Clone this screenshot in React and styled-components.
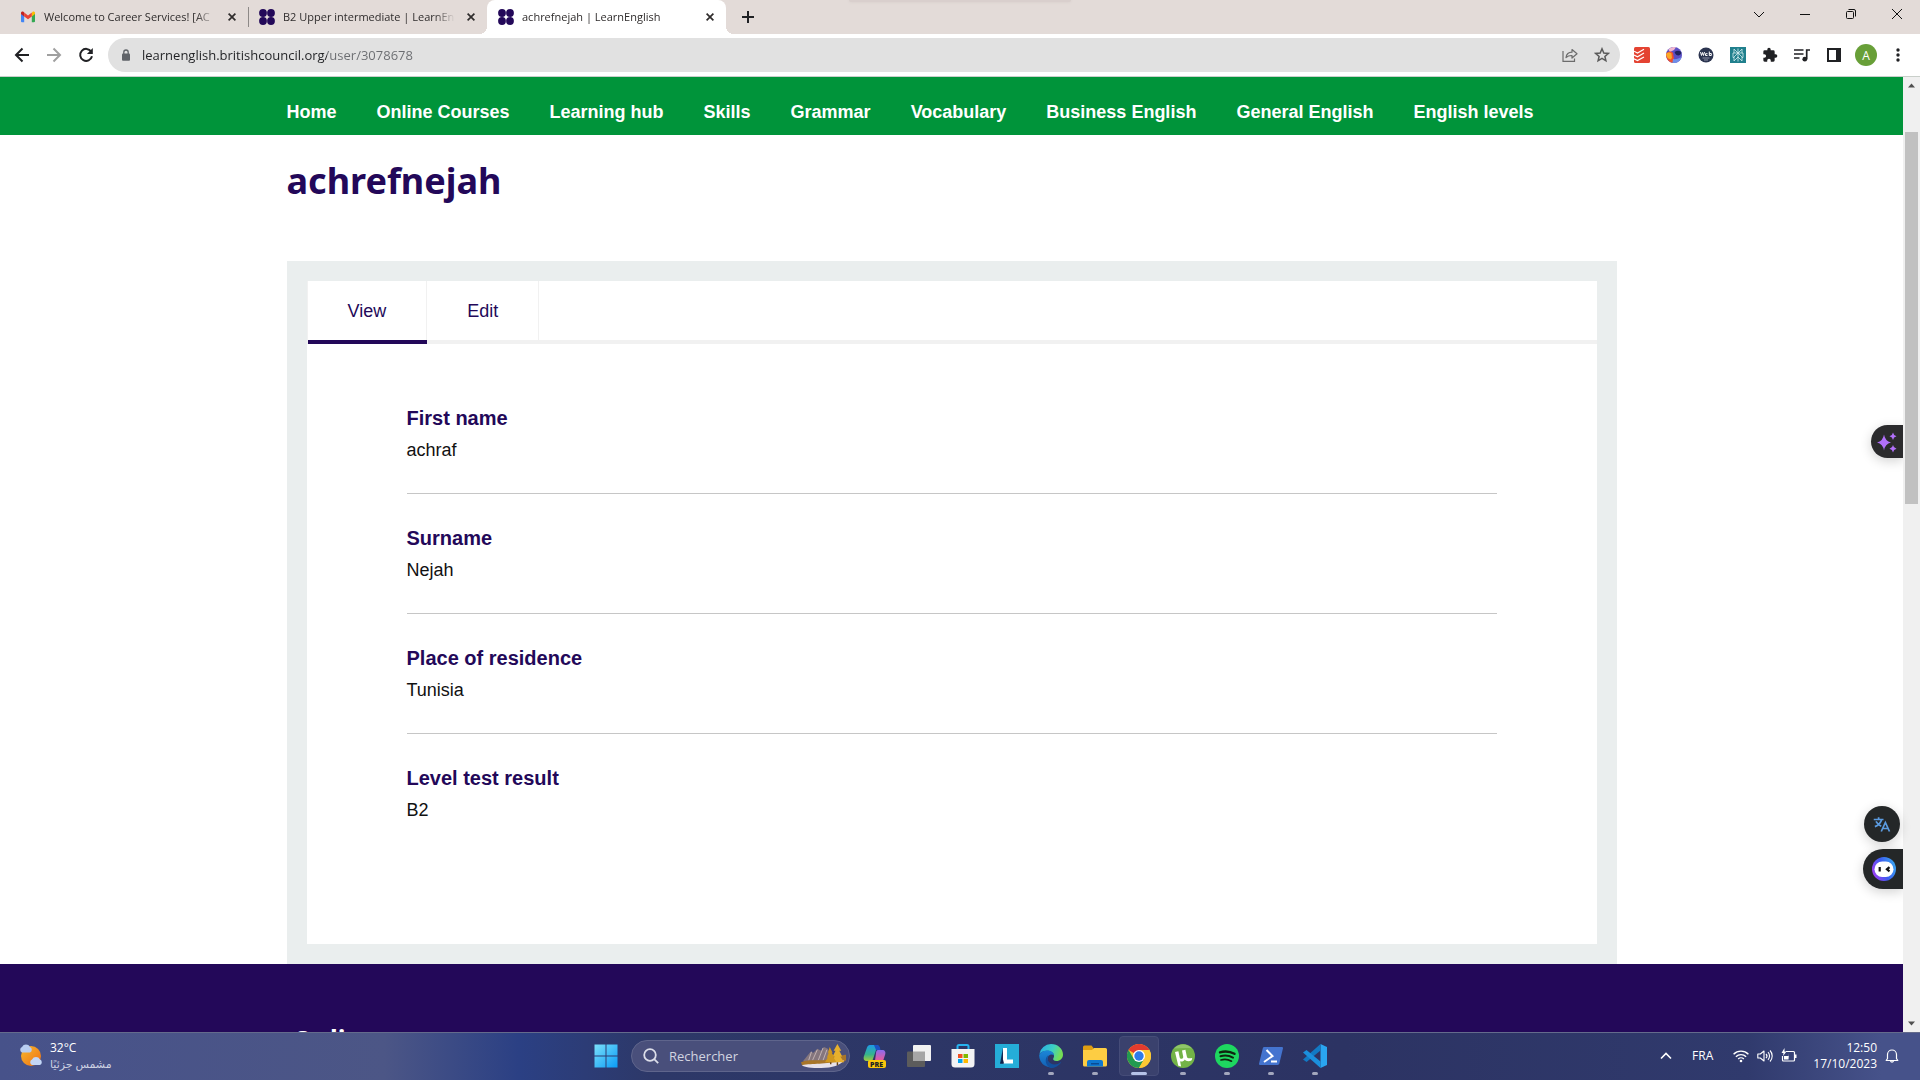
import React from "react";
import styled, { createGlobalStyle } from "styled-components";

const UI = '"Open Sans", "Noto Sans", "DejaVu Sans", sans-serif';
const BODY = '"Liberation Sans", Arial, sans-serif';
const BRAND = '"Noto Sans", "Open Sans", sans-serif';
const INDIGO = "#230859";

const GlobalStyle = createGlobalStyle`
  *, *::before, *::after { box-sizing: border-box; }
  html, body { margin: 0; height: 100%; overflow: hidden; }
  button { margin: 0; padding: 0; border: 0; background: none; color: inherit; font: inherit; cursor: pointer; }
  a { color: inherit; text-decoration: none; }
  svg { display: block; flex: none; }
`;

const Screen = styled.div`
  display: flex;
  flex-direction: column;
  height: 100vh;
  background: #fff;
  font-family: ${UI};
`;

/* Browser window */

const TabStrip = styled.div`
  position: relative;
  display: flex;
  height: 34px;
  padding-left: 9px;
  background: #e3dbd8;
  color: #2f2c2c;
`;

const HiddenToast = styled.div`
  position: absolute;
  top: 0;
  left: 50%;
  width: 222px;
  height: 2px;
  margin-left: -111px;
  border-radius: 0 0 4px 4px;
  background: #d9cfcd;
  box-shadow: 0 0 3px #d3c9c7;
`;

const TabBox = styled.div`
  position: relative;
  display: flex;
  align-items: center;
  width: 239px;
  height: 34px;
  padding: 0 8px 0 11px;
  border-radius: 8px 8px 0 0;
  background: ${(p) => (p.$active ? "#fff" : "transparent")};

  &::before, &::after {
    content: "";
    display: ${(p) => (p.$active ? "block" : "none")};
    position: absolute;
    bottom: 0;
    width: 8px;
    height: 8px;
  }
  &::before { right: 100%; background: radial-gradient(circle at 0 0, transparent 8px, #fff 8px); }
  &::after { left: 100%; background: radial-gradient(circle at 100% 0, transparent 8px, #fff 8px); }
`;

const TabDivider = styled.span`
  align-self: flex-start;
  width: 1px;
  height: 20px;
  margin: 7px -1px 0 0;
  background: #8d8987;
`;

const TabTitle = styled.button`
  flex: 1;
  min-width: 0;
  height: 28px;
  margin-left: 8px;
  overflow: hidden;
  font-size: 11px;
  line-height: 28px;
  text-align: left;
  white-space: nowrap;
  mask-image: linear-gradient(to right, #000 88%, transparent);
`;

const TabButton = styled.button`
  display: grid;
  place-items: center;
  width: 16px;
  height: 34px;
  margin-left: ${(p) => p.$gap || 8}px;
`;

const WindowControls = styled.div`
  display: flex;
  margin-left: auto;
  color: #111;
`;

const WindowButton = styled.button`
  display: grid;
  place-items: center;
  width: 46px;
  height: 28px;
`;

const Toolbar = styled.div`
  display: flex;
  align-items: center;
  height: 43px;
  padding: 0 6px;
  border-bottom: 1px solid #c9cfca;
  background: #fff;
  color: #202124;
`;

const ToolButton = styled.button`
  display: grid;
  place-items: center;
  width: 32px;
  height: 34px;
  color: ${(p) => p.$color || "#202124"};
`;

const Omnibox = styled.form`
  display: flex;
  flex: 1;
  align-items: center;
  height: 34px;
  margin: 0 6px;
  padding: 0 2px 0 12px;
  border-radius: 17px;
  background: #e1e1e1;
`;

const Address = styled.input`
  flex: 1;
  min-width: 0;
  height: 34px;
  margin-left: 10px;
  padding: 0;
  border: 0;
  outline: 0;
  background: linear-gradient(to right, #202124 185px, #6a6c70 185px);
  background-clip: text;
  color: #202124;
  -webkit-text-fill-color: transparent;
  font-family: ${UI};
  font-size: 13px;
`;

const Avatar = styled.span`
  display: grid;
  place-items: center;
  width: 22px;
  height: 22px;
  border-radius: 50%;
  background: #689f38;
  color: #fff;
  font-size: 12px;
`;

/* Page viewport */

const Viewport = styled.div`
  position: relative;
  display: flex;
  flex: 1;
  min-height: 0;
`;

const Page = styled.div`
  flex: 1;
  min-width: 0;
  overflow: hidden;
  font-family: ${BODY};
  font-size: 18px;
`;

const Container = styled.div`
  max-width: 1330px;
  margin: 0 auto;
`;

const NavBar = styled.nav`
  background: #00943a;
`;

const NavList = styled(Container).attrs({ as: "ul" })`
  display: flex;
  gap: 40px;
  padding: 25px 0 13px;
  color: #fff;
  font-weight: bold;
  line-height: 20px;
  list-style: none;
  white-space: nowrap;
`;

const PageTitle = styled.h1`
  margin: 0;
  padding: 20px 0 54px;
  color: ${INDIGO};
  font-family: ${BRAND};
  font-size: 36px;
  line-height: 52px;
`;

const Frame = styled.main`
  padding: 20px;
  background: #eaeeee;
`;

const Card = styled.section`
  background: #fff;
`;

const CardTabs = styled.div`
  display: flex;
  border-bottom: 4px solid #f1f1f1;
  border-left: 1px solid #f1f1f1;
`;

const CardTab = styled.a`
  padding: 2px 40px 0;
  border-right: 1px solid #f1f1f1;
  box-shadow: ${(p) => (p.$current ? `0 4px 0 ${INDIGO}` : "none")};
  color: ${INDIGO};
  line-height: 57px;
`;

const Fields = styled.dl`
  margin: 0;
  padding: 30px 100px 90px;
`;

const Field = styled.div`
  padding: 30px 0 25px;
  border-bottom: 1px solid #c6c6c6;

  &:last-child { border-color: transparent; }
`;

const FieldName = styled.dt`
  color: ${INDIGO};
  font-size: 20px;
  font-weight: bold;
  line-height: 28px;
`;

const FieldValue = styled.dd`
  margin: 0;
  color: #111;
  line-height: 36px;
`;

const Footer = styled.footer`
  padding: 56px 0;
  background: ${INDIGO};
  color: #fff;
`;

const FooterTitle = styled.h2`
  margin: 0;
  padding-left: 6px;
  font-family: ${BRAND};
  font-size: 26px;
  line-height: 40px;
`;

const ScrollBar = styled.div`
  display: grid;
  grid-template-rows: 17px 38fr 372fr 511fr 17px;
  justify-items: center;
  align-items: center;
  width: 17px;
  background: #f0f0f0;
`;

const ScrollThumb = styled.div`
  grid-row: 3;
  align-self: stretch;
  width: 13px;
  background: #c1c1c1;
`;

const ScrollArrow = styled.button`
  display: grid;
  place-items: center;
  grid-row: ${(p) => p.$row};
  width: 17px;
  height: 17px;
`;

const FloatButton = styled.button`
  position: absolute;
  top: ${(p) => p.$top}px;
  right: ${(p) => (p.$round ? 20 : 17)}px;
  display: flex;
  align-items: center;
  justify-content: ${(p) => (p.$round ? "center" : "flex-start")};
  width: ${(p) => p.$w}px;
  height: ${(p) => p.$h}px;
  padding-left: ${(p) => p.$pad || 0}px;
  border-radius: ${(p) => (p.$round ? "50%" : "20px 0 0 20px")};
  background: ${(p) => p.$bg || "#242728"};
  box-shadow: 0 3px 12px rgba(0, 0, 0, 0.18);
  clip-path: ${(p) => (p.$round ? "none" : "inset(-20px 0 -20px -20px)")};
`;

/* Taskbar */

const TaskBar = styled.footer`
  display: grid;
  grid-template-columns: 1fr auto 1fr;
  height: 48px;
  padding-bottom: 1px;
  border-top: 1px solid #646b8c;
  background: linear-gradient(to right, #47528a 0, #4c5686 20%, #2b4084 27%, #2d3868 34%, #2c3363 70%, #303a6d 91%, #46528a 98%);
  color: #fff;
  font-size: 12px;
`;

const Weather = styled.button`
  display: flex;
  align-items: center;
  justify-self: start;
  gap: 7px;
  padding-left: 17px;
  line-height: 16px;
  text-align: left;
`;

const WeatherText = styled.span`
  display: block;
  color: ${(p) => (p.$soft ? "#cdd1e2" : "#fff")};
  font-size: ${(p) => (p.$soft ? 11 : 12)}px;
`;

const Apps = styled.div`
  display: flex;
  padding-left: 1px;
`;

const AppButton = styled.button`
  position: relative;
  display: grid;
  place-items: center;
  width: 44px;
  height: 46px;

  &::after {
    content: "";
    display: ${(p) => (p.$state ? "block" : "none")};
    position: absolute;
    bottom: 4px;
    left: 50%;
    width: ${(p) => (p.$state === "active" ? 16 : 6)}px;
    height: 3px;
    border-radius: 2px;
    background: ${(p) => (p.$state === "active" ? "#b5c2e8" : "#a3a7bd")};
    transform: translateX(-50%);
  }
`;

const ActivePlate = styled.span`
  display: grid;
  place-items: center;
  width: 40px;
  height: 40px;
  border: 1px solid #454c78;
  border-radius: 4px;
  background: #3a416d;
`;

const SearchBox = styled.label`
  display: flex;
  align-items: center;
  align-self: center;
  width: 219px;
  height: 32px;
  margin: 0 3px;
  padding: 0 2px 0 11px;
  border: 1px solid #5f658c;
  border-radius: 16px;
  background: #494f7b;
`;

const SearchInput = styled.input`
  flex: 1;
  min-width: 0;
  height: 28px;
  margin-left: 10px;
  padding: 0;
  border: 0;
  outline: 0;
  background: transparent;
  color: #fff;
  font-family: ${UI};
  font-size: 13px;

  &::placeholder { color: #d2d4e0; opacity: 1; }
`;

const Tray = styled.div`
  display: flex;
  align-items: center;
  justify-content: flex-end;
  padding-right: 20px;
`;

const TrayButton = styled.button`
  display: flex;
  align-items: center;
  gap: 8px;
  height: 40px;
  margin-left: ${(p) => p.$gap || 0}px;
  line-height: 16px;
  text-align: right;
`;

/* Drawings */

const Line = ({ size = 16, box = 16, w = 1, children, ...rest }) => (
  <svg width={size} height={size} viewBox={`0 0 ${box} ${box}`} fill="none" stroke="currentColor" strokeWidth={w} aria-hidden="true" {...rest}>
    {children}
  </svg>
);

const Art = ({ size = 24, box = 24, children }) => (
  <svg width={size} height={size} viewBox={`0 0 ${box} ${box}`} aria-hidden="true">
    {children}
  </svg>
);

const Gmail = () => (
  <svg width="16" height="16" viewBox="0 0 16 16" aria-hidden="true">
    <path d="M1 4v8.3c0 .5.4.9.9.9h2.3V6.5z" fill="#4285f4" />
    <path d="M15 4v8.3c0 .5-.4.9-.9.9h-2.3V6.5z" fill="#34a853" />
    <path d="M11.8 4v3.4L15 5V3.9c0-1.300-1.500-1.900-2.400-1.200z" fill="#fbbc04" />
    <path d="M4.200 7.400V3.600L8 6.500l3.800-2.900v3.800L8 10.300z" fill="#ea4335" />
    <path d="M1 3.900V5l3.200 2.400V3.600l-.8-.9C2.500 2 1 2.600 1 3.900z" fill="#c5221f" />
  </svg>
);

const Dots = () => (
  <Art size={16} box={16}>
    <g fill={INDIGO}>
      <circle cx="4" cy="4" r="3.900" />
      <circle cx="12" cy="4" r="3.900" />
      <circle cx="4" cy="12" r="3.900" />
      <circle cx="12" cy="12" r="3.900" />
    </g>
  </Art>
);

const Cross = () => (
  <Line size={8} box={8} w={1.700}><path d="M.6.6l6.800 6.800M7.400.6L.6 7.400" /></Line>
);

const Arrow = ({ flip }) => (
  <Line w={2}>
    {flip
      ? <path d="M1 8h12.500M7.500 1.500L14 8l-6.500 6.500" />
      : <path d="M15 8H2.500M8.500 1.500L2 8l6.500 6.500" />}
  </Line>
);

const Reload = () => (
  <Line w={2}>
    <path d="M13.200 4.600A6 6 0 1 0 14 9.300" />
    <path d="M14.800 1v6H8.900z" fill="currentColor" stroke="none" />
  </Line>
);

const Lock = () => (
  <Line size={12} box={12}>
    <rect x="2" y="4.500" width="8" height="7.200" rx="1" fill="#5f6368" stroke="none" />
    <path d="M3.800 5V3.200a2.200 2.200 0 0 1 4.400 0V5" stroke="#5f6368" strokeWidth="1.300" />
  </Line>
);

const Share = () => (
  <Line w={1.200}>
    <path d="M1 4v10.400h11.500v-3" />
    <path d="M4 10.500C4.500 7 6.500 5.300 10 5.200V2.500l5 4.300-5 4.200V8.500C7.500 8.400 5.600 9 4 10.500z" strokeLinejoin="round" />
  </Line>
);

const Star = () => (
  <Line w={1.500}><path d="M8 1.800l1.800 4.200 4.500.4-3.400 3 1 4.400L8 11.400l-3.900 2.400 1-4.400-3.400-3 4.500-.4z" strokeLinejoin="miter" /></Line>
);

const Todoist = () => (
  <Art size={16} box={16}>
    <rect width="16" height="16" rx="1.500" fill="#e44332" />
    <g fill="none" stroke="#fff" strokeWidth="1.200">
      <path d="M0 4.200L3.500 6 10 2.300M0 8l3.500 1.800L10 6.100M0 11.800l3.500 1.800L10 9.900" />
    </g>
  </Art>
);

const Parrot = () => (
  <Art size={16} box={16}>
    <circle cx="8" cy="8" r="8" fill="#5b4fc4" />
    <path d="M2.300 2.400A8 8 0 0 1 10 .3L8 3 4 5z" fill="#f0b7cf" />
    <path d="M.1 7C2 4 5 4 7 6l1 6-1.500 3.800A8 8 0 0 1 .1 7z" fill="#f0502f" />
    <path d="M.1 7C1.500 5 4 5 5.500 6.500L6 11l-1.500 1.500C2 12 .2 10 .1 7z" fill="#fba928" />
    <path d="M8.500 5c3-2 6-1.500 7 1-1.500 3.500-5.500 3.500-7-1z" fill="#20235f" />
    <path d="M7 12c3 .5 6-.5 8.600-2A8 8 0 0 1 6.500 15.800z" fill="#6f8fe8" />
  </Art>
);

const WebBadge = () => (
  <Art size={16} box={16}>
    <circle cx="8" cy="8" r="7.500" fill="#2c3550" />
    <path d="M2.500 5l1 3.500 1-3 1 3 1-3.500M9.500 6.700H7.500v1.800h2M11.300 4.500v4h2V6.500h-2" fill="none" stroke="#fff" strokeWidth="1" />
    <path d="M4.500 11h7M6 13h4" stroke="#8d93a8" strokeWidth="1" />
  </Art>
);

const Perplexity = () => (
  <Art size={16} box={16}>
    <rect width="16" height="16" fill="#20808d" />
    <g fill="none" stroke="#d4eef0" strokeWidth=".8">
      <path d="M8 1.500v13M4 2l4 4 4-4v4M4 2v4M3 10.500V6h10v4.500M8 6l-4 4v4l4-4M8 6l4 4v4l-4-4M3 10.500h1M12 10.500h1" />
    </g>
  </Art>
);

const Puzzle = () => (
  <Art size={16} box={24}>
    <path fill="#202124" d="M20.500 11H19V7a2 2 0 0 0-2-2h-4V3.500a2.500 2.500 0 0 0-5 0V5H4a2 2 0 0 0-2 2v3.800h1.500a2.700 2.700 0 0 1 0 5.400H2V20a2 2 0 0 0 2 2h3.800v-1.500a2.700 2.700 0 0 1 5.400 0V22H17a2 2 0 0 0 2-2v-4h1.500a2.500 2.500 0 0 0 0-5z" />
  </Art>
);

const Playlist = () => (
  <Line w={1.600}>
    <path d="M0 3h9.500M0 7h9.500M0 11h5.500M12.700 12V3H16" strokeWidth="1.700" />
    <circle cx="10.800" cy="12.200" r="2.400" fill="currentColor" stroke="none" />
  </Line>
);

const SidePanel = () => (
  <Art size={14} box={14}>
    <path fill="#202124" fillRule="evenodd" d="M0 0h14v14H0zM2 2v10h7V2z" />
  </Art>
);

const More = () => (
  <Art size={16} box={16}>
    <circle cx="8" cy="3" r="1.700" fill="#202124" />
    <circle cx="8" cy="8" r="1.700" fill="#202124" />
    <circle cx="8" cy="13" r="1.700" fill="#202124" />
  </Art>
);

const Sparkles = () => (
  <Art size={22} box={22}>
    <g fill="#b270fb">
      <path d="M8 3.500Q9 10 15 11.500 9 13 8 19.500 7 13 1 11.500 7 10 8 3.500z" />
      <path d="M17 1.500q.5 3 3.500 3.800Q17.500 6 17 9q-.5-3-3.500-3.700Q16.500 4.500 17 1.500z" />
      <path d="M17 14q.5 3 3.500 3.800-3 .7-3.500 3.700-.5-3-3.500-3.700Q16.500 17 17 14z" />
    </g>
  </Art>
);

const Translate = () => (
  <Line size={18} box={24} w={2.300} style={{ color: "#5b9be0" }}>
    <path d="M1 6h13M7.500 3v3M11.500 6c-1 4-5 8-9 9.500M4 8.500c1.500 3 4 5 7 6.500M11 22l5.500-12L22 22M13 18h7" />
  </Line>
);

const Bot = () => (
  <Art size={24} box={24}>
    <defs>
      <linearGradient id="bot" x1="0" y1="0.700" x2="1" y2="0.300">
        <stop offset="0" stopColor="#a23df5" />
        <stop offset=".5" stopColor="#3c5cf0" />
        <stop offset="1" stopColor="#39a8f2" />
      </linearGradient>
    </defs>
    <circle cx="12" cy="12" r="12" fill="url(#bot)" />
    <rect x="2.500" y="4.500" width="19" height="15.500" rx="7.700" fill="#fff" />
    <path d="M7.700 10v4.500M17.500 10.200l-2.500 2.100 2.500 2" fill="none" stroke="#111" strokeWidth="2.200" />
  </Art>
);

const WeatherIcon = () => (
  <Art size={26} box={26}>
    <defs>
      <linearGradient id="sun" x1="0" y1="0" x2="1" y2="1">
        <stop offset="0" stopColor="#f8b92e" />
        <stop offset="1" stopColor="#ee6f13" />
      </linearGradient>
    </defs>
    <circle cx="14" cy="13" r="10" fill="url(#sun)" />
    <path d="M5 9.500a3 3 0 0 1 0-5.500A4.500 4.500 0 0 1 13 4 3 3 0 0 1 13 9.500z" fill="#b8cdf2" />
    <path d="M15 22a3 3 0 0 1 0-5.500 4.500 4.500 0 0 1 8 0 3 3 0 0 1 0 5.500z" fill="#c3d7f7" />
  </Art>
);

const Windows = () => (
  <Art>
    <defs>
      <linearGradient id="win" x1="0" y1="0" x2="1" y2="1">
        <stop offset="0" stopColor="#7be0fb" />
        <stop offset="1" stopColor="#0a9bf5" />
      </linearGradient>
    </defs>
    <path fill="url(#win)" d="M.500.500h11v11h-11zM12.500.500h11v11h-11zM.500 12.500h11v11h-11zM12.500 12.500h11v11h-11z" />
  </Art>
);

const SearchGlass = () => (
  <Line w={1.800} style={{ color: "#dcdee9" }}><circle cx="7" cy="7" r="5.800" /><path d="M11.200 11.200l4 4" /></Line>
);

const Landscape = () => (
  <svg width="46" height="25" viewBox="0 0 48 26" aria-hidden="true">
    <path d="M2 18L10 8l3 1 4-4 4 2 3-4 4 2 5 13z" fill="#85767d" />
    <path d="M11 8l-3 9M17 6l-5 11M23 4l-5 13M27 6l-4 11" stroke="#c4b5b5" strokeWidth="1" />
    <path d="M0 19c10-4 20 0 32-4s14-3 15-4v6c-6 5-20 7-46 5z" fill="#a8762a" />
    <path d="M1 22c12-2 22 0 44-5-4 5-12 8-24 8-10 0-18-1-20-3z" fill="#e6e1ea" />
    <path d="M38 0l4 7h-2l3 6h-2l4 6H31l4-6h-2l3-6h-2z" fill="#e8b02c" />
    <path d="M30 3l3 6h-1l3 5h-1l3 5H25l3-5h-1l2-5h-1z" fill="#d0971e" />
    <path d="M38 19v3M31 19v2" stroke="#6b4414" strokeWidth="1.500" />
  </svg>
);

const PreText = styled.text`
  font-family: ${UI};
  font-size: 7px;
  font-weight: 800;
`;

const Copilot = () => (
  <Art>
    <defs>
      <linearGradient id="cpa" x1="0" y1="0" x2="0" y2="1">
        <stop offset="0" stopColor="#1e9be8" />
        <stop offset=".6" stopColor="#37b58b" />
        <stop offset="1" stopColor="#a6cc3c" />
      </linearGradient>
      <linearGradient id="cpb" x1="0" y1="0" x2="0" y2="1">
        <stop offset="0" stopColor="#8b6bf0" />
        <stop offset="1" stopColor="#ef5b93" />
      </linearGradient>
    </defs>
    <path d="M7 1h6c2 0 3 1 3.500 3L13 6l-3 9c-.5 1.500-1.500 2-3 2H4c-3 0-4-2-3-5L4 3.500C4.500 2 5.500 1 7 1z" fill="url(#cpa)" />
    <path d="M11 1h3c1.500 0 2.500 1 3 3l.5 2H13z" fill="#1b52c4" />
    <path d="M15 6h4c3 0 4 2 3 5l-2 6h-8l1-8c.2-2 .8-3 2-3z" fill="url(#cpb)" />
    <rect x="5" y="16" width="18" height="8" rx="2" fill="#fbc60c" />
    <PreText x="7" y="22.500" fill="#222">PRE</PreText>
  </Art>
);

const TaskView = () => (
  <Art>
    <rect x="0" y="7.500" width="18" height="15.500" rx="1" fill="#5c5c5c" />
    <rect x="6" y="1" width="18" height="16" rx="1" fill="#f1f1f1" />
    <path d="M6 7.500h12V17H6z" fill="#a6a6a6" />
  </Art>
);

const Store = () => (
  <Art>
    <path d="M6.500 7V2.500A1.500 1.500 0 0 1 8 1h8a1.500 1.500 0 0 1 1.500 1.500V7" fill="none" stroke="#27b3ef" strokeWidth="2" />
    <path d="M.5 5h23v15a3.500 3.500 0 0 1-3.500 3.500H4A3.500 3.500 0 0 1 .5 20z" fill="#f3f3f4" />
    <path d="M7 10h4.500v4H7z" fill="#f25022" /><path d="M12.500 10H17v4h-4.500z" fill="#7fba00" />
    <path d="M7 15h4.500v4H7z" fill="#00a4ef" /><path d="M12.500 15H17v4h-4.500z" fill="#ffb900" />
  </Art>
);

const Lively = () => (
  <Art>
    <path fill="#25add8" d="M0 0h24v24H0z" />
    <path d="M8 4L5 19.500h4z" fill="#152a55" />
    <path d="M8 4h4v11.500h6v4H8z" fill="#fff" />
    <path d="M5 19.500h4l-1-4z" fill="#0f2148" />
  </Art>
);

const Edge = () => (
  <Art>
    <defs>
      <linearGradient id="edga" x1="0" y1="0" x2="1" y2=".3">
        <stop offset="0" stopColor="#27a8e8" />
        <stop offset=".6" stopColor="#3ccfc4" />
        <stop offset="1" stopColor="#75dd55" />
      </linearGradient>
      <linearGradient id="edgb" x1="0" y1="0" x2="0" y2="1">
        <stop offset="0" stopColor="#1b87d8" />
        <stop offset="1" stopColor="#1360b4" />
      </linearGradient>
    </defs>
    <path d="M.3 10A12 12 0 0 1 12 0c7 0 12 5 12 10.500 0 4-3 6.500-6.500 6.500-3 0-4-1.500-3-3 1.500-2.500 0-6-4-7C6 6 2 8 .3 10z" fill="url(#edga)" />
    <path d="M.2 11C2 7.500 5.500 6.500 8.500 6.500c4 0 6.500 2.500 6.500 5-2-2-6-1-6.500 3-.4 4 4 9 9 7.800A12 12 0 0 1 .2 11z" fill="url(#edgb)" />
    <path d="M9.500 11c-3 4 1 9.500 6 9.500 3 0 5-1 7-3-2 4-6 6.500-10.500 6.500C6 22 5 14 9.500 11z" fill="#134f9c" />
  </Art>
);

const Explorer = () => (
  <Art>
    <path d="M0 3a1.500 1.500 0 0 1 1.500-1.500h7l2 2.500V7H0z" fill="#e09e12" />
    <path d="M0 6h9l2-2h11.500A1.500 1.500 0 0 1 24 5.500V21a1.500 1.500 0 0 1-1.500 1.500h-21A1.500 1.500 0 0 1 0 21z" fill="#fdcd43" />
    <path d="M4 22.500V18a2 2 0 0 1 2-2h12a2 2 0 0 1 2 2v4.500z" fill="#0f78d0" />
    <path d="M8 19h8v1.500H8z" fill="#0a4c94" />
  </Art>
);

const Chrome = () => (
  <Art>
    <circle cx="12" cy="12" r="12" fill="#fcc934" />
    <path d="M12 12L1.600 6A12 12 0 0 1 22.400 6z" fill="#e33b2e" />
    <path d="M1.600 6A12 12 0 0 0 12 24l5.200-9H6.800z" fill="#229a50" />
    <path d="M12 6h10.400A12 12 0 0 1 12 24l5.200-9z" fill="#fcc934" />
    <circle cx="12" cy="12" r="6" fill="#fff" />
    <circle cx="12" cy="12" r="4.700" fill="#2f7bea" />
  </Art>
);

const Torrent = () => (
  <Art>
    <circle cx="12" cy="12" r="12" fill="#73b347" />
    <path d="M3 4.500a12 12 0 0 1 18 0c-6-1-12 0-18 0z" fill="#8fc46a" />
    <path d="M4 8l3.400-.7 1.300 6.200c.5 2 3.800 1.500 3.500-.8L11 6.500l3.400-.7 1.500 7c.4 1.700 2.500 1.900 5.300 1.100l-.5 2.300c-2.500 1.400-5.700 1.300-6.900-.7-1 1.900-3 2.400-4.700 1.800l1 5.300-2.800-.8z" fill="#fff" />
  </Art>
);

const Spotify = () => (
  <Art>
    <circle cx="12" cy="12" r="12" fill="#1ed760" />
    <g fill="none" stroke="#10240f" strokeLinecap="round">
      <path d="M5 8.300c5-1.500 10-1 14.500 1.500" strokeWidth="2.400" />
      <path d="M5.500 12.300c4.500-1.300 8.500-.8 12.500 1.300" strokeWidth="2" />
      <path d="M6 16c3.700-1 7.300-.6 10.500 1.200" strokeWidth="1.700" />
    </g>
  </Art>
);

const PowerShell = () => (
  <Art>
    <path d="M5.500 3h17.500c.8 0 1.200.6 1 1.300l-3.700 15.500c-.2.700-.9 1.200-1.700 1.200H1c-.8 0-1.200-.6-1-1.300L3.800 4.200C4 3.500 4.700 3 5.500 3z" fill="#4474cf" />
    <path d="M7.500 6l6 6L5 18M12 17.500h6" fill="none" stroke="#fff" strokeWidth="2" />
  </Art>
);

const Code = () => (
  <Art>
    <path d="M17.500 0L24 3v18l-6.500 3z" fill="#2aa5f0" />
    <path d="M17.500 0v6.500L3.500 18 0 15.500z" fill="#1279c4" />
    <path d="M17.500 24v-6.500L3.500 6 0 8.500z" fill="#1b8fdd" />
  </Art>
);

const Wifi = () => (
  <Line w={1.400}>
    <path d="M.6 6.200a10.500 10.500 0 0 1 14.800 0M2.900 8.700a7.200 7.200 0 0 1 10.200 0M5.200 11a4 4 0 0 1 5.600 0" />
    <circle cx="8" cy="13" r="1.300" fill="currentColor" stroke="none" />
  </Line>
);

const Volume = () => (
  <Line w={1.100}>
    <path d="M.8 6v4h2.500L7 13V3L3.300 6zM9 6a3 3 0 0 1 0 4.200M11 4.200a5.500 5.500 0 0 1 0 7.600M13 2.500a8 8 0 0 1 0 11" strokeLinejoin="round" />
  </Line>
);

const Battery = () => (
  <Line w={1.200}>
    <path d="M5 3.500h7.500a1 1 0 0 1 1 1v7.500a1 1 0 0 1-1 1h-10a1 1 0 0 1-1-1V8" />
    <path d="M3 8h5V5l-.5 6.500H3zM14 6.500h1.500v3.500H14zM3.500 0L.5 5h2L2 8l3.500-4.500h-2z" fill="currentColor" stroke="none" />
  </Line>
);

const Bell = () => (
  <Line w={1.200}>
    <path d="M3.500 10.500V6.500a4.500 4.500 0 0 1 9 0v4l1.300 2H2.200zM6.500 13a1.600 1.600 0 0 0 3 0" strokeLinejoin="round" />
  </Line>
);

/* Content */

const browserTabs = [
  { icon: Gmail, title: "Welcome to Career Services! [AC" },
  { icon: Dots, title: "B2 Upper intermediate | LearnEn" },
  { icon: Dots, title: "achrefnejah | LearnEnglish", active: true },
];

const extensions = [
  ["Todoist", Todoist],
  ["Language tutor", Parrot],
  ["Web toolbox", WebBadge],
  ["Perplexity", Perplexity],
  ["Extensions", Puzzle],
  ["Media controls", Playlist],
  ["Side panel", SidePanel],
];

const navItems = [
  "Home", "Online Courses", "Learning hub", "Skills", "Grammar",
  "Vocabulary", "Business English", "General English", "English levels",
];

const fields = [
  ["First name", "achraf"],
  ["Surname", "Nejah"],
  ["Place of residence", "Tunisia"],
  ["Level test result", "B2"],
];

const apps = [
  ["Copilot", Copilot],
  ["Task view", TaskView],
  ["Store", Store],
  ["Lively", Lively],
  ["Edge", Edge, "open"],
  ["Explorer", Explorer, "open"],
  ["Chrome", Chrome, "active"],
  ["Torrent", Torrent, "open"],
  ["Spotify", Spotify, "open"],
  ["PowerShell", PowerShell, "open"],
  ["Code", Code, "open"],
];

function BrowserChrome() {
  return (
    <header>
      <TabStrip>
        {browserTabs.map(({ icon: Icon, title, active }, i) => (
          <React.Fragment key={title}>
            <TabBox $active={active}>
              <Icon />
              <TabTitle>{title}</TabTitle>
              <TabButton aria-label="Close tab"><Cross /></TabButton>
            </TabBox>
            {i === 0 && <TabDivider />}
          </React.Fragment>
        ))}
        <TabButton aria-label="New tab" $gap={14}>
          <Line size={12} box={12} w={2} style={{ color: "#202124" }}><path d="M6 0v12M0 6h12" /></Line>
        </TabButton>
        <HiddenToast />
        <WindowControls>
          <WindowButton aria-label="Search tabs"><Line size={10} box={10}><path d="M0 3l5 5 5-5" /></Line></WindowButton>
          <WindowButton aria-label="Minimise"><Line size={10} box={10}><path d="M0 5.500h10" /></Line></WindowButton>
          <WindowButton aria-label="Restore">
            <Line size={10} box={10}><rect x=".5" y="2.500" width="7" height="7" rx="1" /><path d="M2.500.5H8A1.500 1.500 0 0 1 9.500 2v5.500" /></Line>
          </WindowButton>
          <WindowButton aria-label="Close"><Line size={10} box={10}><path d="M0 0l10 10M10 0L0 10" /></Line></WindowButton>
        </WindowControls>
      </TabStrip>
      <Toolbar>
        <ToolButton aria-label="Back"><Arrow /></ToolButton>
        <ToolButton aria-label="Forward" $color="#a0a0a0"><Arrow flip /></ToolButton>
        <ToolButton aria-label="Reload"><Reload /></ToolButton>
        <Omnibox onSubmit={(e) => e.preventDefault()}>
          <Lock />
          <Address aria-label="Address" defaultValue="learnenglish.britishcouncil.org/user/3078678" />
          <ToolButton type="button" aria-label="Share" $color="#6c6c6c"><Share /></ToolButton>
          <ToolButton type="button" aria-label="Bookmark" $color="#5a5a5a"><Star /></ToolButton>
        </Omnibox>
        {extensions.map(([name, Icon]) => (
          <ToolButton key={name} aria-label={name}><Icon /></ToolButton>
        ))}
        <ToolButton aria-label="Profile"><Avatar>A</Avatar></ToolButton>
        <ToolButton aria-label="Menu"><More /></ToolButton>
      </Toolbar>
    </header>
  );
}

function ProfilePage() {
  return (
    <Page>
      <NavBar>
        <NavList>
          {navItems.map((name) => <li key={name}><a href="#">{name}</a></li>)}
        </NavList>
      </NavBar>
      <Container>
        <PageTitle>achrefnejah</PageTitle>
        <Frame>
          <Card>
            <CardTabs>
              <CardTab href="#view" $current>View</CardTab>
              <CardTab href="#edit">Edit</CardTab>
            </CardTabs>
            <Fields>
              {fields.map(([name, value]) => (
                <Field key={name}>
                  <FieldName>{name}</FieldName>
                  <FieldValue>{value}</FieldValue>
                </Field>
              ))}
            </Fields>
          </Card>
        </Frame>
      </Container>
      <Footer>
        <Container><FooterTitle>Online</FooterTitle></Container>
      </Footer>
    </Page>
  );
}

function WindowsTaskBar() {
  return (
    <TaskBar>
      <Weather>
        <WeatherIcon />
        <span>
          <WeatherText>32°C</WeatherText>
          <WeatherText $soft lang="ar">مشمس جزئيًا</WeatherText>
        </span>
      </Weather>
      <Apps>
        <AppButton aria-label="Start"><Windows /></AppButton>
        <SearchBox>
          <SearchGlass />
          <SearchInput aria-label="Rechercher" placeholder="Rechercher" />
          <Landscape />
        </SearchBox>
        {apps.map(([name, Icon, state]) => (
          <AppButton key={name} aria-label={name} $state={state}>
            {state === "active" ? <ActivePlate><Icon /></ActivePlate> : <Icon />}
          </AppButton>
        ))}
      </Apps>
      <Tray>
        <TrayButton aria-label="Hidden icons"><Line size={12} box={12} w={1.600}><path d="M1 8.500l5-5 5 5" /></Line></TrayButton>
        <TrayButton $gap={20}>FRA</TrayButton>
        <TrayButton $gap={20} aria-label="Quick settings"><Wifi /><Volume /><Battery /></TrayButton>
        <TrayButton $gap={16}><span>12:50<br />17/10/2023</span></TrayButton>
        <TrayButton $gap={7} aria-label="Notifications"><Bell /></TrayButton>
      </Tray>
    </TaskBar>
  );
}

export default function App() {
  return (
    <Screen>
      <GlobalStyle />
      <BrowserChrome />
      <Viewport>
        <ProfilePage />
        <ScrollBar>
          <ScrollArrow $row={1} aria-label="Scroll up"><Art size={7} box={7}><path d="M0 5.500h7L3.500 1.500z" fill="#505050" /></Art></ScrollArrow>
          <ScrollThumb />
          <ScrollArrow $row={5} aria-label="Scroll down"><Art size={7} box={7}><path d="M0 1.500h7L3.500 5.500z" fill="#505050" /></Art></ScrollArrow>
        </ScrollBar>
        <FloatButton aria-label="Assistant" $top={348} $w={32} $h={33} $pad={5} $bg="#2b2b2d"><Sparkles /></FloatButton>
        <FloatButton aria-label="Translate" $top={729} $w={36} $h={36} $round><Translate /></FloatButton>
        <FloatButton aria-label="Chat" $top={772} $w={40} $h={40} $pad={9}><Bot /></FloatButton>
      </Viewport>
      <WindowsTaskBar />
    </Screen>
  );
}
